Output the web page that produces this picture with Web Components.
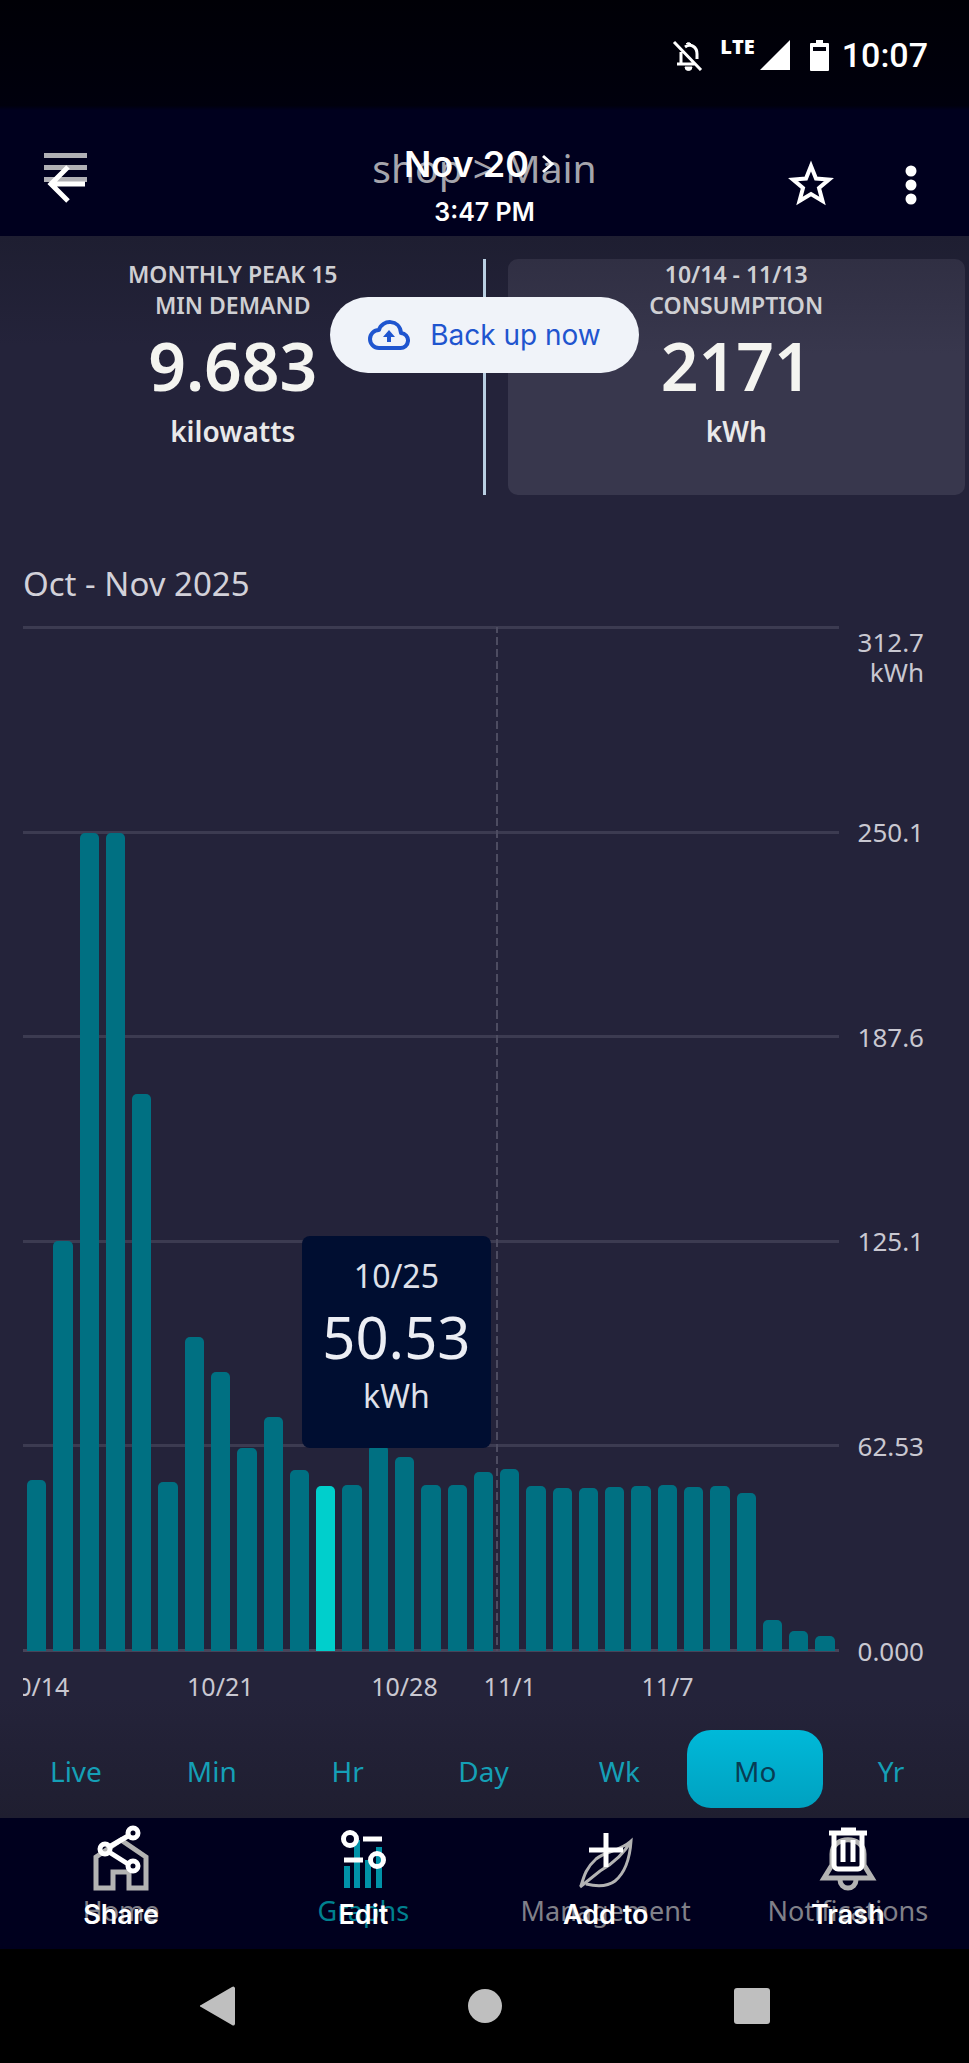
<!DOCTYPE html>
<html lang="en">
<head>
    <meta charset="UTF-8">
    <meta name="viewport" content="width=device-width, initial-scale=1.0">
    <title>Energy monitor</title>
    <style>
        body {
            margin: 0;
            background: #000;
            color: #fff;
            font-family: "Noto Sans", "Open Sans", sans-serif;
        }
    </style>
</head>
<body>
    <phone-screen>
        <status-bar slot="status" time="10:07"></status-bar>
        <top-bar slot="top">
            <span slot="app">shop &gt; Main</span>
            <span slot="date">Nov 20</span>
            <span slot="time">3:47 PM</span>
        </top-bar>
        <metric-row slot="main">
            <metric-card value="9.683" unit="kilowatts">MONTHLY PEAK 15<br>MIN DEMAND</metric-card>
            <metric-card value="2171" unit="kWh" selected>10/14 - 11/13<br>CONSUMPTION</metric-card>
            <backup-button slot="over">Back up now</backup-button>
        </metric-row>
        <usage-chart slot="main" heading="Oct - Nov 2025">
            <chart-tip date="10/25" value="50.53" unit="kWh"></chart-tip>
        </usage-chart>
        <range-tabs slot="main" items="Live,Min,Hr,Day,Wk,Mo,Yr" current="Mo"></range-tabs>
        <bottom-bar slot="bottom"></bottom-bar>
        <system-nav slot="bottom"></system-nav>
    </phone-screen>

    <script>
        // small helper: attach an open shadow root and fill it
        function render(el, html) {
            el.attachShadow({ mode: 'open' });
            el.shadowRoot.innerHTML = '<style>*{box-sizing:border-box} button{font:inherit;color:inherit;background:none;border:0;padding:0;margin:0} a{color:inherit;text-decoration:none} svg{display:block}</style>' + html;
        }

        class PhoneScreen extends HTMLElement {
            connectedCallback() {
                render(this, `
                <style>
                    :host { display: flex; flex-direction: column; min-height: 100vh; }
                    header { background: #00001e; }
                    main {
                        flex: 1;
                        padding: 23px 0 9px;
                        background:
                            linear-gradient(#1e1e31, #24233a00) top / 100% 110px no-repeat,
                            linear-gradient(#24233a00, #1f1e30) bottom / 100% 120px no-repeat,
                            #24233a;
                    }
                </style>
                <header><slot name="status"></slot><slot name="top"></slot></header>
                <main><slot name="main"></slot></main>
                <footer><slot name="bottom"></slot></footer>`);
            }
        }

        class StatusBar extends HTMLElement {
            connectedCallback() {
                render(this, `
                <style>
                    :host {
                        display: flex; align-items: center; justify-content: flex-end;
                        height: 110px; padding-right: 41px;
                        background: linear-gradient(#000006, #00000d 96%, #00001e);
                    }
                    .lte { align-self: flex-start; margin: 38px 5px 0 16px; font: 800 20px/17px "Open Sans", sans-serif; }
                    .battery { margin: 0 13px 0 20px; }
                    time { font: 500 34px/40px Roboto, sans-serif; }
                </style>
                <svg width="32" height="32" fill="none" stroke="#fff" stroke-width="3">
                    <path d="M2 3 29 31M5 25H24M9 25V13M13 8C19 4 25 8 25 15V20"/>
                    <path d="M14 5a3 3 0 0 1 5 0M13 28h7a3 3 0 0 1-7 0z" fill="#fff" stroke-width="1"/>
                </svg>
                <span class="lte">LTE</span>
                <svg width="30" height="30"><path d="M0 30 30 0V30z" fill="#fff"/></svg>
                <svg class="battery" width="19" height="31"><path d="M6 0h7v3h5a1 1 0 0 1 1 1V30a1 1 0 0 1-1 1H1a1 1 0 0 1-1-1V4a1 1 0 0 1 1-1h5z" fill="#fff"/><path d="M3 7h13v4H3z" fill="#00000c"/></svg>
                <time>${this.getAttribute('time')}</time>`);
            }
        }

        // app title with the photo viewer controls lying over it
        class TopBar extends HTMLElement {
            connectedCallback() {
                render(this, `
                <style>
                    :host { display: grid; height: 126px; }
                    .layer { grid-area: 1 / 1; display: grid; grid-template-columns: 1fr auto 1fr; }
                    .app { height: 116px; padding: 0 44px; align-items: center; color: #a5a5ac; }
                    .app slot { font-size: 39px; line-height: 52px; display: block; }
                    .viewer { margin-top: 30px; padding: 0 34px; }
                    .viewer button { height: 88px; justify-self: start; }
                    .title { text-align: center; font-family: Inter, Roboto, sans-serif; font-weight: 600; line-height: 48px; }
                    .date { display: flex; align-items: center; gap: 12px; font-size: 36px; }
                    .time { font-size: 25px; padding-left: 10px; }
                    .title { margin-left: -10px; }
                    .actions { display: flex; justify-content: flex-end; gap: 52px; }
                </style>
                <div class="layer app">
                    <button aria-label="Menu"><svg width="43" height="30" fill="#b0b0b5"><path d="M0 0h43v5H0zM0 12h43v5H0zM0 24h43v5H0z"/></svg></button>
                    <slot name="app"></slot>
                </div>
                <div class="layer viewer">
                    <button aria-label="Back"><svg width="60" height="48" fill="none" stroke="#fff" stroke-width="5"><path d="M34 7 17 24 34 41M17 24H51"/></svg></button>
                    <div class="title">
                        <div class="date"><slot name="date"></slot><svg width="14" height="20" fill="none" stroke="#fff" stroke-width="3"><path d="M2 2 11 10 2 18"/></svg></div>
                        <div class="time"><slot name="time"></slot></div>
                    </div>
                    <div class="actions">
                        <button aria-label="Favorite"><svg width="48" height="48" fill="none" stroke="#fff" stroke-width="4"><path d="M24 6 29 18.500 42 19.500 32 28 35.500 41 24 34 12.500 41 16 28 6 19.500 19 18.500z"/></svg></button>
                        <button aria-label="More"><svg width="48" height="48" fill="#fff"><circle cx="24" cy="11" r="5.500"/><circle cx="24" cy="25" r="5.500"/><circle cx="24" cy="39" r="5.500"/></svg></button>
                    </div>
                </div>`);
            }
        }

        class MetricRow extends HTMLElement {
            connectedCallback() {
                render(this, `
                <style>
                    :host { display: block; position: relative; }
                    .row { display: grid; grid-template-columns: 1fr 1fr; gap: 46px; padding: 0 4px;
                        background: linear-gradient(#b9cfe2, #b9cfe2) center / 3px 100% no-repeat; }
                    .over { position: absolute; top: 38px; left: 0; right: 0; display: flex; justify-content: center; }
                </style>
                <div class="row"><slot></slot></div>
                <div class="over"><slot name="over"></slot></div>`);
            }
        }

        class MetricCard extends HTMLElement {
            connectedCallback() {
                render(this, `
                <style>
                    :host { display: block; text-align: center; min-height: 236px; border-radius: 10px; font-weight: 600; }
                    :host([selected]) { background: linear-gradient(#302f43, #38374d 40%); }
                    .label { font-size: 23px; line-height: 31px; color: #cfcfd3; }
                    .value { font-size: 66px; line-height: 88px; color: #f4f4f0; }
                    .unit { font-size: 28px; line-height: 44px; color: #e9e9ea; }
                </style>
                <div class="label"><slot></slot></div>
                <div class="value">${this.getAttribute('value')}</div>
                <div class="unit">${this.getAttribute('unit')}</div>`);
            }
        }

        class BackupButton extends HTMLElement {
            connectedCallback() {
                render(this, `
                <style>
                    button { display: flex; align-items: center; gap: 20px; padding: 0 38px; height: 76px; border-radius: 38px;
                        background: #f0f3f9; color: #1f55cf; font: 400 28px/36px Inter, Roboto, sans-serif; }
                </style>
                <button>
                    <svg width="42" height="32" fill="none" stroke="#1f55cf" stroke-width="4"><path d="M11 29H32a7 7 0 0 0 1-15C32 0 14 0 11 11a9 9 0 0 0 0 18z" stroke-linejoin="round"/><path d="M21 11 27 18H23V23H19V18H15z" fill="#1f55cf" stroke="none"/></svg>
                    <slot></slot>
                </button>`);
            }
        }

        // daily kWh from 10/14 to 11/13
        const usage = [52.2, 125.2, 249.9, 249.9, 170.1, 51.6, 95.9, 85.2, 62, 71.5, 55.3, 50.53, 50.6, 63, 59.2, 50.6,
            50.6, 54.7, 55.6, 50.3, 49.7, 49.7, 50, 50.3, 50.8, 50, 50.4, 48.2, 9.5, 6.1, 4.6];
        const days = { 0: '10/14', 7: '10/21', 14: '10/28', 18: '11/1', 24: '11/7' };
        const maxValue = 312.7;
        const picked = 11;

        class UsageChart extends HTMLElement {
            connectedCallback() {
                const bars = usage.map((v, i) =>
                    `<i class="${i === picked ? 'on' : ''}" style="height:${(v / maxValue * 100).toFixed(2)}%"></i>`).join('');
                const labels = usage.map((v, i) => `<span>${days[i] || ''}</span>`).join('');
                const axis = ['312.7<br>kWh', '250.1', '187.6', '125.1', '62.53', '0.000'];
                render(this, `
                <style>
                    :host { display: block; padding: 69px 45px 0 23px; color: #c9c8d1; }
                    h2 { margin: 0 0 23px; font-size: 33px; line-height: 40px; font-weight: 400; color: #d2d1d9; }
                    .chart { display: grid; grid-template-columns: 1fr auto; column-gap: 19px; }
                    .plot { position: relative; height: 1024px; display: grid; }
                    .lines, .bars, .month { grid-area: 1 / 1; }
                    .lines { display: flex; flex-direction: column; justify-content: space-between; }
                    .lines b { height: 3px; margin: -1px 0; background: #3c3b51; }
                    .lines b:last-child { background: #474459; }
                    .bars { display: flex; align-items: flex-end; gap: 7px; padding: 0 4px; min-width: 0; }
                    .bars i { flex: 1; background: #007082; border-radius: 5px 5px 0 0; }
                    .bars i.on { background: #00cfcc; }
                    .month { width: calc(100% * 18 / 31 + 1px); border-right: 2px solid;
                        border-image: repeating-linear-gradient(#4d4c61 0 8px, transparent 8px 12px) 2; }
                    .axis { display: flex; flex-direction: column; justify-content: space-between; text-align: right; font-size: 26px; line-height: 30px; }
                    .axis span { height: 0; display: flex; align-items: center; justify-content: flex-end; }
                    .axis span:first-child { align-items: flex-start; }
                    .days { display: grid; grid-template-columns: repeat(31, minmax(0, 1fr)); margin-top: 17px; overflow: hidden; font-size: 25px; line-height: 36px; }
                    .days span { display: flex; justify-content: center; white-space: nowrap; }
                    .tip { position: absolute; top: 59%; left: 34%; margin: 5px 0 0 2px; }
                </style>
                <h2>${this.getAttribute('heading')}</h2>
                <div class="chart">
                    <div class="plot">
                        <div class="lines">${'<b></b>'.repeat(6)}</div>
                        <div class="bars">${bars}</div>
                        <div class="month"></div>
                        <div class="tip"><slot></slot></div>
                    </div>
                    <div class="axis">${axis.map(t => `<span><div>${t}</div></span>`).join('')}</div>
                    <div class="days">${labels}</div>
                </div>`);
            }
        }

        class ChartTip extends HTMLElement {
            connectedCallback() {
                render(this, `
                <style>
                    :host { display: block; padding: 18px 20px 32px; border-radius: 8px; background: #000e31; color: #dfe1ea; text-align: center; font-size: 32px; }
                    .date { line-height: 44px; }
                    .value { font-size: 58px; line-height: 78px; color: #eceef4; }
                    .unit { line-height: 40px; }
                </style>
                <div class="date">${this.getAttribute('date')}</div>
                <div class="value">${this.getAttribute('value')}</div>
                <div class="unit">${this.getAttribute('unit')}</div>`);
            }
        }

        class RangeTabs extends HTMLElement {
            connectedCallback() {
                const current = this.getAttribute('current');
                const tabs = this.getAttribute('items').split(',').map(t =>
                    `<button role="tab" aria-selected="${t === current}">${t}</button>`).join('');
                render(this, `
                <style>
                    :host { display: flex; margin-top: 26px; padding: 0 10px 0 8px; }
                    button { flex: 1; height: 78px; padding-top: 4px; border-radius: 24px; font-size: 28px; line-height: 36px; color: #159fb6; }
                    button[aria-selected="true"] { background: linear-gradient(#00b9d9, #00a1c0); color: #083d54; }
                </style>${tabs}`);
                this.setAttribute('role', 'tablist');
            }
        }

        // app tabs, and the viewer's toolbar over them
        class BottomBar extends HTMLElement {
            connectedCallback() {
                render(this, `
                <style>
                    :host { display: grid; height: 131px; background: #00001e; }
                    nav { grid-area: 1 / 1; display: grid; grid-template-columns: repeat(4, 1fr); }
                    a, button { display: flex; flex-direction: column; align-items: center; line-height: 34px; }
                    svg { fill: none; stroke: currentColor; }
                    .tabs { padding-top: 16px; font-size: 27px; color: #808089; }
                    .tabs svg { color: #b3b3b3; stroke-width: 5; }
                    .tabs .on { color: #00808f; }
                    .tabs .on svg { color: #0092a8; stroke-width: 6; }
                    .tools { padding-top: 6px; font-family: Inter, Roboto, sans-serif; font-size: 27px; font-weight: 600; }
                    .tools button { gap: 18px; }
                    .tools svg { stroke-width: 5; }
                </style>
                <nav class="tabs">
                    <a href="#home"><svg width="72" height="60"><path d="M11 54V23L36 6 61 23V54H44V38H28V54z"/></svg>Home</a>
                    <a href="#graphs" class="on"><svg width="72" height="60"><path d="M20 54V32M30 54V6M41 54V26M52 54V13"/></svg>Graphs</a>
                    <a href="#management"><svg width="72" height="60"><path stroke-width="3" d="M11 52C14 42 16 34 26 25 36 17 50 17 61 7 60 22 56 38 45 47 37 53 28 53 16 50M10 53 30 37C42 30 54 20 61 7"/></svg>Management</a>
                    <a href="#notifications"><svg width="72" height="60"><path d="M12 44 20 31V20C20 1 52 1 52 20V31L60 44zM28 46a8 8 0 0 0 16 0"/></svg>Notifications</a>
                </nav>
                <nav class="tools">
                    <button><svg width="56" height="56"><path d="M35 12 16 23M16 28 35 40"/><circle cx="40" cy="9" r="5"/><circle cx="12" cy="25" r="5"/><circle cx="40" cy="42" r="5"/></svg>Share</button>
                    <button><svg width="56" height="56"><circle cx="15" cy="15" r="6.500"/><circle cx="42" cy="36" r="6.500"/><path d="M28 15H47M9 36H28"/></svg>Edit</button>
                    <button><svg width="56" height="56"><path d="M28 9V43M11 26H45"/></svg>Add to</button>
                    <button><svg width="56" height="56"><path d="M9 9H47M21 6H36M14 9V41a4 4 0 0 0 4 4H38a4 4 0 0 0 4-4V9M23 16V38M33 16V38"/></svg>Trash</button>
                </nav>`);
            }
        }

        class SystemNav extends HTMLElement {
            connectedCallback() {
                render(this, `
                <style>
                    :host { display: grid; grid-template-columns: repeat(3, 1fr); justify-items: center; height: 114px; padding: 0 84px; background: #000; }
                    svg { fill: #bfbfbf; }
                </style>
                <button aria-label="Back"><svg width="40" height="40"><path d="M3 19 34 1a2 2 0 0 1 3 1V38a2 2 0 0 1-3 1L3 21a1 1 0 0 1 0-2z"/></svg></button>
                <button aria-label="Home"><svg width="40" height="40"><circle cx="20" cy="20" r="17"/></svg></button>
                <button aria-label="Recents"><svg width="40" height="40"><rect x="2" y="2" width="36" height="36" rx="3"/></svg></button>`);
            }
        }

        customElements.define('phone-screen', PhoneScreen);
        customElements.define('status-bar', StatusBar);
        customElements.define('top-bar', TopBar);
        customElements.define('metric-row', MetricRow);
        customElements.define('metric-card', MetricCard);
        customElements.define('backup-button', BackupButton);
        customElements.define('usage-chart', UsageChart);
        customElements.define('chart-tip', ChartTip);
        customElements.define('range-tabs', RangeTabs);
        customElements.define('bottom-bar', BottomBar);
        customElements.define('system-nav', SystemNav);
    </script>
</body>
</html>
